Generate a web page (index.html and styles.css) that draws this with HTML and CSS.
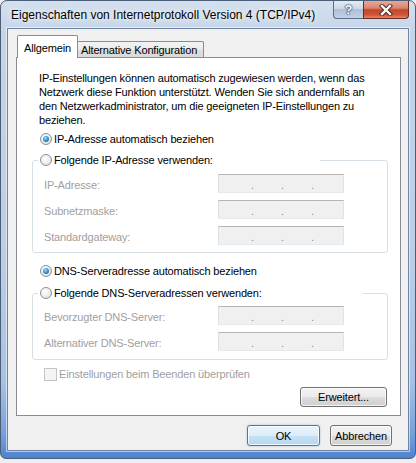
FILE: index.html
```html
<!DOCTYPE html>
<html lang="de">
<head>
<meta charset="utf-8">
<title>Eigenschaften von Internetprotokoll Version 4 (TCP/IPv4)</title>
<link rel="stylesheet" href="styles.css">
</head>
<body>
<div class="window">
  <div class="titlebar">
    <div class="title">Eigenschaften von Internetprotokoll Version 4 (TCP/IPv4)</div>
    <div class="caption-buttons">
      <div class="cap-btn help"><span class="help-glyph">?</span></div>
      <div class="cap-btn close">
        <svg width="16" height="12" viewBox="0 0 16 12"><path d="M4 2 L12 10 M12 2 L4 10" stroke="#4a2418" stroke-width="4.2" stroke-linecap="square" fill="none"/><path d="M4 2 L12 10 M12 2 L4 10" stroke="#ffffff" stroke-width="2.4" stroke-linecap="square" fill="none"/></svg>
      </div>
    </div>
  </div>
  <div class="client">
    <div class="tabs">
      <div class="tab active">Allgemein</div>
      <div class="tab">Alternative Konfiguration</div>
    </div>
    <div class="panel">
      <p class="intro">IP-Einstellungen können automatisch zugewiesen werden, wenn das<br>Netzwerk diese Funktion unterstützt. Wenden Sie sich andernfalls an<br>den Netzwerkadministrator, um die geeigneten IP-Einstellungen zu<br>beziehen.</p>
      <div class="radio-row first"><span class="radio checked"></span><span>IP-Adresse automatisch beziehen</span></div>
      <fieldset class="group group-ip">
        <legend class="legend legend-ip"><div class="radio-row in-legend"><span class="radio"></span><span>Folgende IP-Adresse verwenden:</span></div></legend>
        <div class="field-row"><span class="field-label">IP-Adresse:</span><span class="ip"><i>.</i><i>.</i><i>.</i></span></div>
        <div class="field-row"><span class="field-label">Subnetzmaske:</span><span class="ip"><i>.</i><i>.</i><i>.</i></span></div>
        <div class="field-row"><span class="field-label">Standardgateway:</span><span class="ip"><i>.</i><i>.</i><i>.</i></span></div>
      </fieldset>
      <div class="radio-row dns"><span class="radio checked"></span><span>DNS-Serveradresse automatisch beziehen</span></div>
      <fieldset class="group group-dns">
        <legend class="legend legend-dns"><div class="radio-row in-legend"><span class="radio"></span><span>Folgende DNS-Serveradressen verwenden:</span></div></legend>
        <div class="field-row"><span class="field-label">Bevorzugter DNS-Server:</span><span class="ip"><i>.</i><i>.</i><i>.</i></span></div>
        <div class="field-row"><span class="field-label">Alternativer DNS-Server:</span><span class="ip"><i>.</i><i>.</i><i>.</i></span></div>
      </fieldset>
      <div class="check-row"><span class="checkbox"></span><span>Einstellungen beim Beenden überprüfen</span></div>
      <div class="panel-actions"><div class="btn adv">Erweitert...</div></div>
    </div>
    <div class="footer">
      <div class="btn ok">OK</div>
      <div class="btn cancel">Abbrechen</div>
    </div>
  </div>
</div>
</body>
</html>
```
FILE: styles.css
```css
* { box-sizing: border-box; }
html, body { margin: 0; padding: 0; }
body {
  width: 416px;
  height: 463px;
  background: #eceef1;
  font-family: "Liberation Sans", Arial, sans-serif;
  font-size: 11px;
  letter-spacing: -0.15px;
  color: #000;
  overflow: hidden;
}
.window {
  width: 416px;
  height: 459px;
  border: 1px solid #4c5f78;
  border-radius: 7px 7px 6px 6px;
  background: linear-gradient(to bottom, #d4e0ee 0px, #c5d5e8 30px, #bccee5 250px, #a8c2e3 380px, #7ba3da 430px, #4b82cf 458px);
  display: flex;
  flex-direction: column;
}
.titlebar {
  height: 27px;
  display: flex;
  align-items: flex-start;
}
.title {
  font-size: 12px;
  letter-spacing: 0;
  line-height: 16px;
  padding: 6px 0 0 10px;
  color: #000;
  text-shadow: 0 0 8px rgba(255,255,255,0.95), 0 0 4px rgba(255,255,255,0.8);
}
.caption-buttons {
  margin-left: auto;
  margin-right: 6px;
  display: flex;
}
.cap-btn {
  height: 18px;
  display: flex;
  align-items: center;
  justify-content: center;
  border: 1px solid #5d6f88;
  border-top: none;
}
.help {
  width: 30px;
  border-radius: 0 0 0 4px;
  border-right: none;
  background: linear-gradient(to bottom, #e3eaf3 0%, #cbd8e8 45%, #aebfd6 50%, #c2d3e8 100%);
}
.help-glyph {
  font-family: "Liberation Sans", Arial, sans-serif;
  font-weight: bold;
  font-size: 13px;
  color: #fff;
  line-height: 14px;
  text-shadow: 0 0 1px #243a58, 0 0 1px #243a58, 0 0 2px #243a58;
}
.close {
  width: 46px;
  border-color: #6a2a1e;
  border-radius: 0 0 4px 0;
  background: linear-gradient(to bottom, #e8a898 0%, #d98670 42%, #c4462b 52%, #cf5536 80%, #e0876a 100%);
}
.close svg { display: block; }
.client {
  margin: 0 6px 0 6px;
  height: 423px;
  background: #f0f0f0;
  border: 1px solid #6e84a2;
  box-shadow: 0 0 0 1px rgba(255,255,255,0.55);
  padding: 6px 0 4px 0;
  display: flex;
  flex-direction: column;
}
.tabs {
  display: flex;
  align-items: flex-end;
  height: 22px;
  margin-left: 9px;
}
.tab {
  height: 16px;
  width: 127px;
  margin-left: -1px;
  padding: 1px 0 0 3px;
  line-height: 14px;
  border: 1px solid #898c95;
  border-bottom: none;
  border-radius: 2px 2px 0 0;
  background: linear-gradient(to bottom, #f3f3f3 0%, #ebebeb 50%, #dedede 50%, #d9d9d9 100%);
  white-space: nowrap;
}
.tab.active {
  position: relative;
  z-index: 1;
  margin-left: 0;
  width: 61px;
  height: 23px;
  margin-bottom: -1px;
  padding: 5px 0 0 6px;
  background: #fff;
}
.panel {
  margin-left: 8px;
  width: 385px;
  height: 359px;
  background: #fff;
  border: 1px solid #898c95;
  padding: 13px 13px 8px 15px;
  display: flex;
  flex-direction: column;
}
.intro {
  margin: 0 0 0 7px;
  line-height: 14px;
  white-space: nowrap;
}
.radio-row {
  display: flex;
  align-items: center;
  height: 16px;
  margin-left: 8px;
  white-space: nowrap;
}
.radio-row.first { margin-top: 4px; }
.radio-row.dns { margin-top: 10px; }
.radio-row.in-legend { margin-left: 0; }
.radio {
  position: relative;
  width: 12px;
  height: 12px;
  margin-right: 2px;
  border-radius: 50%;
  border: 1px solid #8d9095;
  background: radial-gradient(circle at 40% 35%, #ffffff 0%, #f2f2f2 40%, #d4d6d9 100%);
  flex: none;
}
.radio.checked::after {
  content: "";
  position: absolute;
  left: 2px;
  top: 2px;
  width: 6px;
  height: 6px;
  border-radius: 50%;
  background: radial-gradient(circle at 40% 35%, #9fe0f8 0%, #3a9ad2 45%, #184d86 100%);
}
.group {
  margin: 5px 0 0 0;
  width: 356px;
  border: 1px solid #d5dfe5;
  border-radius: 3px;
  padding: 6px 5px 7px 5px;
  display: flex;
  flex-direction: column;
  gap: 7px;
}
.group-dns { margin-top: 6px; padding-top: 5px; padding-bottom: 8px; }
.legend {
  padding: 0 0 0 2px;
  margin: 0;
  background: #fff;
}
.legend-ip { width: 282px; }
.legend-dns { width: 325px; }
.field-row {
  display: flex;
  align-items: center;
  height: 19px;
  padding-left: 6px;
  color: #a0a0a0;
  white-space: nowrap;
}
.field-label { width: 174px; padding-top: 2px; }
.ip {
  width: 126px;
  height: 19px;
  background: #f0f0f0;
  border: 1px solid;
  border-color: #b5b5b5 #e2e3ea #e3e9ef #dbdfe6;
  display: flex;
  align-items: center;
  padding: 2px 0 0 32px;
  gap: 27px;
}
.ip i {
  font-style: normal;
  color: #8a8a8a;
  width: 3px;
  line-height: 14px;
}
.check-row {
  display: flex;
  align-items: center;
  height: 16px;
  margin: 6px 0 0 12px;
  color: #a0a0a0;
  white-space: nowrap;
}
.checkbox {
  width: 13px;
  height: 13px;
  margin-right: 2px;
  border: 1px solid #c2c4c8;
  background: #f4f4f4;
  flex: none;
}
.panel-actions {
  display: flex;
  justify-content: flex-end;
  margin-top: 5px;
}
.btn {
  height: 20px;
  display: flex;
  align-items: center;
  justify-content: center;
  border: 1px solid #707070;
  border-radius: 3px;
  background: linear-gradient(to bottom, #f2f2f2 0%, #ebebeb 50%, #dddddd 50%, #cfcfcf 100%);
  box-shadow: inset 0 0 0 1px rgba(255,255,255,0.75);
  white-space: nowrap;
}
.btn.adv { width: 87px; }
.footer {
  display: flex;
  justify-content: flex-end;
  gap: 10px;
  margin-top: 9px;
  padding-right: 16px;
}
.footer .btn { height: 21px; }
.btn.ok {
  width: 73px;
  border-color: #3c7fb1;
  background: linear-gradient(to bottom, #eaf5fc 0%, #dcedf9 50%, #c6e2f5 50%, #b5d8f1 100%);
  box-shadow: inset 0 0 0 1px rgba(255,255,255,0.8), 0 0 2px rgba(60,140,200,0.5);
}
.btn.cancel { width: 62px; }
```
